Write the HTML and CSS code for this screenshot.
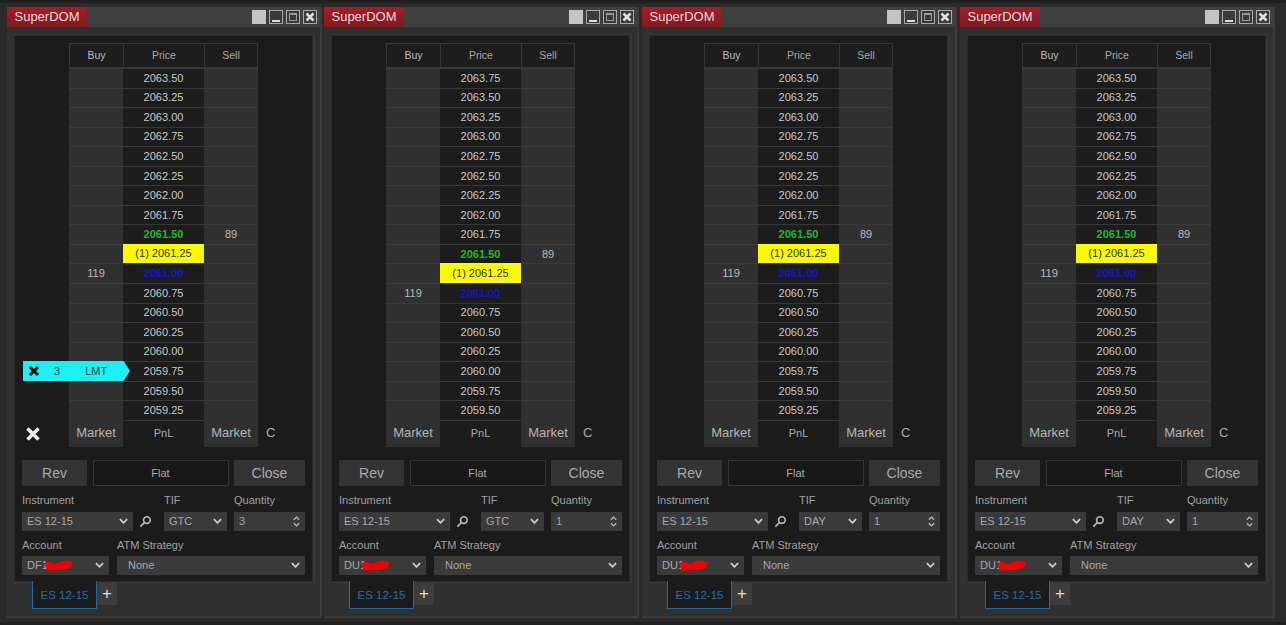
FILE: index.html
```html
<!DOCTYPE html>
<html lang="en">
<head>
<meta charset="utf-8">
<title>SuperDOM</title>
<link rel="stylesheet" href="styles.css">
</head>
<body>
<div class="desk">

<section class="win first">
  <header class="title"><span class="brand">SuperDOM</span><span class="wbtns"><i class="wb solid"></i><i class="wb"><b class="mn"></b></i><i class="wb"><b class="mx"></b></i><i class="wb"><svg viewBox="0 0 12 12"><path d="M2.5 2.5l7 7M9.5 2.5l-7 7"/></svg></i></span></header>
  <div class="panel">
    <div class="ladder">
      <div class="hd buy">Buy</div><div class="hd">Price</div><div class="hd">Sell</div>
      <div class="buy"></div><div class="px">2063.50</div><div class="sell"></div>
      <div class="buy"></div><div class="px">2063.25</div><div class="sell"></div>
      <div class="buy"></div><div class="px">2063.00</div><div class="sell"></div>
      <div class="buy"></div><div class="px">2062.75</div><div class="sell"></div>
      <div class="buy"></div><div class="px">2062.50</div><div class="sell"></div>
      <div class="buy"></div><div class="px">2062.25</div><div class="sell"></div>
      <div class="buy"></div><div class="px">2062.00</div><div class="sell"></div>
      <div class="buy"></div><div class="px">2061.75</div><div class="sell"></div>
      <div class="buy"></div><div class="px ask">2061.50</div><div class="sell">89</div>
      <div class="buy"></div><div class="px last">(1) 2061.25</div><div class="sell"></div>
      <div class="buy">119</div><div class="px bid">2061.00</div><div class="sell"></div>
      <div class="buy"></div><div class="px">2060.75</div><div class="sell"></div>
      <div class="buy"></div><div class="px">2060.50</div><div class="sell"></div>
      <div class="buy"></div><div class="px">2060.25</div><div class="sell"></div>
      <div class="buy"></div><div class="px">2060.00</div><div class="sell"></div>
      <div class="buy"></div><div class="px">2059.75</div><div class="sell"></div>
      <div class="buy"></div><div class="px">2059.50</div><div class="sell"></div>
      <div class="buy"></div><div class="px">2059.25</div><div class="sell"></div>
      <div class="cancel"><svg viewBox="0 0 16 16"><path d="M2.5 2.5l11 11M13.5 2.5l-11 11"/></svg></div><div class="mk">Market</div><div class="pnl">PnL</div><div class="mk">Market</div><div class="cc">C</div>
      <div class="order"><svg viewBox="0 0 12 12"><path d="M2 2l8 8M10 2l-8 8"/></svg><span class="oq">3</span><span class="ot">LMT</span></div>
    </div>
    <div class="acts"><div class="btn rev">Rev</div><div class="flat">Flat</div><div class="btn close">Close</div></div>
    <div class="form">
      <div class="lbl c1">Instrument</div><div class="lbl c3">TIF</div><div class="lbl c5">Quantity</div>
      <div class="sel c1">ES 12-15<svg class="chev" viewBox="0 0 10 6"><path d="M1 1l4 4 4-4"/></svg></div>
      <svg class="glass" viewBox="0 0 14 14"><circle cx="8.5" cy="5.5" r="3.6"/><path d="M6 8l-4.500 4.500"/></svg>
      <div class="sel c3">GTC<svg class="chev" viewBox="0 0 10 6"><path d="M1 1l4 4 4-4"/></svg></div>
      <div class="sel c5">3<svg class="spin" viewBox="0 0 8 14"><path d="M1 5l3-3 3 3M1 9l3 3 3-3"/></svg></div>
    </div>
    <div class="lbls"><div class="lbl ac">Account</div><div class="lbl">ATM Strategy</div></div>
    <div class="row2">
      <div class="sel ac">DF1<svg class="red" viewBox="0 0 30 10"><path d="M2 5c6-3 8 3 13 0s8-2 13-1M3 7c8 1 16 0 24-2"/></svg><svg class="chev" viewBox="0 0 10 6"><path d="M1 1l4 4 4-4"/></svg></div>
      <div class="sel atm">None<svg class="chev" viewBox="0 0 10 6"><path d="M1 1l4 4 4-4"/></svg></div>
    </div>
  </div>
  <nav class="tabs"><div class="tab">ES 12-15</div><div class="plus">+</div></nav>
</section>

<section class="win">
  <header class="title"><span class="brand">SuperDOM</span><span class="wbtns"><i class="wb solid"></i><i class="wb"><b class="mn"></b></i><i class="wb"><b class="mx"></b></i><i class="wb"><svg viewBox="0 0 12 12"><path d="M2.5 2.5l7 7M9.500 2.5l-7 7"/></svg></i></span></header>
  <div class="panel">
    <div class="ladder">
      <div class="hd buy">Buy</div><div class="hd">Price</div><div class="hd">Sell</div>
      <div class="buy"></div><div class="px">2063.75</div><div class="sell"></div>
      <div class="buy"></div><div class="px">2063.50</div><div class="sell"></div>
      <div class="buy"></div><div class="px">2063.25</div><div class="sell"></div>
      <div class="buy"></div><div class="px">2063.00</div><div class="sell"></div>
      <div class="buy"></div><div class="px">2062.75</div><div class="sell"></div>
      <div class="buy"></div><div class="px">2062.50</div><div class="sell"></div>
      <div class="buy"></div><div class="px">2062.25</div><div class="sell"></div>
      <div class="buy"></div><div class="px">2062.00</div><div class="sell"></div>
      <div class="buy"></div><div class="px">2061.75</div><div class="sell"></div>
      <div class="buy"></div><div class="px ask">2061.50</div><div class="sell">89</div>
      <div class="buy"></div><div class="px last">(1) 2061.25</div><div class="sell"></div>
      <div class="buy">119</div><div class="px bid">2061.00</div><div class="sell"></div>
      <div class="buy"></div><div class="px">2060.75</div><div class="sell"></div>
      <div class="buy"></div><div class="px">2060.50</div><div class="sell"></div>
      <div class="buy"></div><div class="px">2060.25</div><div class="sell"></div>
      <div class="buy"></div><div class="px">2060.00</div><div class="sell"></div>
      <div class="buy"></div><div class="px">2059.75</div><div class="sell"></div>
      <div class="buy"></div><div class="px">2059.50</div><div class="sell"></div>
      <div class="cancel"></div><div class="mk">Market</div><div class="pnl">PnL</div><div class="mk">Market</div><div class="cc">C</div>
    </div>
    <div class="acts"><div class="btn rev">Rev</div><div class="flat">Flat</div><div class="btn close">Close</div></div>
    <div class="form">
      <div class="lbl c1">Instrument</div><div class="lbl c3">TIF</div><div class="lbl c5">Quantity</div>
      <div class="sel c1">ES 12-15<svg class="chev" viewBox="0 0 10 6"><path d="M1 1l4 4 4-4"/></svg></div>
      <svg class="glass" viewBox="0 0 14 14"><circle cx="8.5" cy="5.5" r="3.6"/><path d="M6 8l-4.500 4.500"/></svg>
      <div class="sel c3">GTC<svg class="chev" viewBox="0 0 10 6"><path d="M1 1l4 4 4-4"/></svg></div>
      <div class="sel c5">1<svg class="spin" viewBox="0 0 8 14"><path d="M1 5l3-3 3 3M1 9l3 3 3-3"/></svg></div>
    </div>
    <div class="lbls"><div class="lbl ac">Account</div><div class="lbl">ATM Strategy</div></div>
    <div class="row2">
      <div class="sel ac">DU1<svg class="red" viewBox="0 0 30 10"><path d="M2 5c6-3 8 3 13 0s8-2 13-1M3 7c8 1 16 0 24-2"/></svg><svg class="chev" viewBox="0 0 10 6"><path d="M1 1l4 4 4-4"/></svg></div>
      <div class="sel atm">None<svg class="chev" viewBox="0 0 10 6"><path d="M1 1l4 4 4-4"/></svg></div>
    </div>
  </div>
  <nav class="tabs"><div class="tab">ES 12-15</div><div class="plus">+</div></nav>
</section>

<section class="win">
  <header class="title"><span class="brand">SuperDOM</span><span class="wbtns"><i class="wb solid"></i><i class="wb"><b class="mn"></b></i><i class="wb"><b class="mx"></b></i><i class="wb"><svg viewBox="0 0 12 12"><path d="M2.5 2.5l7 7M9.500 2.5l-7 7"/></svg></i></span></header>
  <div class="panel">
    <div class="ladder">
      <div class="hd buy">Buy</div><div class="hd">Price</div><div class="hd">Sell</div>
      <div class="buy"></div><div class="px">2063.50</div><div class="sell"></div>
      <div class="buy"></div><div class="px">2063.25</div><div class="sell"></div>
      <div class="buy"></div><div class="px">2063.00</div><div class="sell"></div>
      <div class="buy"></div><div class="px">2062.75</div><div class="sell"></div>
      <div class="buy"></div><div class="px">2062.50</div><div class="sell"></div>
      <div class="buy"></div><div class="px">2062.25</div><div class="sell"></div>
      <div class="buy"></div><div class="px">2062.00</div><div class="sell"></div>
      <div class="buy"></div><div class="px">2061.75</div><div class="sell"></div>
      <div class="buy"></div><div class="px ask">2061.50</div><div class="sell">89</div>
      <div class="buy"></div><div class="px last">(1) 2061.25</div><div class="sell"></div>
      <div class="buy">119</div><div class="px bid">2061.00</div><div class="sell"></div>
      <div class="buy"></div><div class="px">2060.75</div><div class="sell"></div>
      <div class="buy"></div><div class="px">2060.50</div><div class="sell"></div>
      <div class="buy"></div><div class="px">2060.25</div><div class="sell"></div>
      <div class="buy"></div><div class="px">2060.00</div><div class="sell"></div>
      <div class="buy"></div><div class="px">2059.75</div><div class="sell"></div>
      <div class="buy"></div><div class="px">2059.50</div><div class="sell"></div>
      <div class="buy"></div><div class="px">2059.25</div><div class="sell"></div>
      <div class="cancel"></div><div class="mk">Market</div><div class="pnl">PnL</div><div class="mk">Market</div><div class="cc">C</div>
    </div>
    <div class="acts"><div class="btn rev">Rev</div><div class="flat">Flat</div><div class="btn close">Close</div></div>
    <div class="form">
      <div class="lbl c1">Instrument</div><div class="lbl c3">TIF</div><div class="lbl c5">Quantity</div>
      <div class="sel c1">ES 12-15<svg class="chev" viewBox="0 0 10 6"><path d="M1 1l4 4 4-4"/></svg></div>
      <svg class="glass" viewBox="0 0 14 14"><circle cx="8.5" cy="5.5" r="3.6"/><path d="M6 8l-4.500 4.500"/></svg>
      <div class="sel c3">DAY<svg class="chev" viewBox="0 0 10 6"><path d="M1 1l4 4 4-4"/></svg></div>
      <div class="sel c5">1<svg class="spin" viewBox="0 0 8 14"><path d="M1 5l3-3 3 3M1 9l3 3 3-3"/></svg></div>
    </div>
    <div class="lbls"><div class="lbl ac">Account</div><div class="lbl">ATM Strategy</div></div>
    <div class="row2">
      <div class="sel ac">DU1<svg class="red" viewBox="0 0 30 10"><path d="M2 5c6-3 8 3 13 0s8-2 13-1M3 7c8 1 16 0 24-2"/></svg><svg class="chev" viewBox="0 0 10 6"><path d="M1 1l4 4 4-4"/></svg></div>
      <div class="sel atm">None<svg class="chev" viewBox="0 0 10 6"><path d="M1 1l4 4 4-4"/></svg></div>
    </div>
  </div>
  <nav class="tabs"><div class="tab">ES 12-15</div><div class="plus">+</div></nav>
</section>

<section class="win">
  <header class="title"><span class="brand">SuperDOM</span><span class="wbtns"><i class="wb solid"></i><i class="wb"><b class="mn"></b></i><i class="wb"><b class="mx"></b></i><i class="wb"><svg viewBox="0 0 12 12"><path d="M2.5 2.5l7 7M9.500 2.5l-7 7"/></svg></i></span></header>
  <div class="panel">
    <div class="ladder">
      <div class="hd buy">Buy</div><div class="hd">Price</div><div class="hd">Sell</div>
      <div class="buy"></div><div class="px">2063.50</div><div class="sell"></div>
      <div class="buy"></div><div class="px">2063.25</div><div class="sell"></div>
      <div class="buy"></div><div class="px">2063.00</div><div class="sell"></div>
      <div class="buy"></div><div class="px">2062.75</div><div class="sell"></div>
      <div class="buy"></div><div class="px">2062.50</div><div class="sell"></div>
      <div class="buy"></div><div class="px">2062.25</div><div class="sell"></div>
      <div class="buy"></div><div class="px">2062.00</div><div class="sell"></div>
      <div class="buy"></div><div class="px">2061.75</div><div class="sell"></div>
      <div class="buy"></div><div class="px ask">2061.50</div><div class="sell">89</div>
      <div class="buy"></div><div class="px last">(1) 2061.25</div><div class="sell"></div>
      <div class="buy">119</div><div class="px bid">2061.00</div><div class="sell"></div>
      <div class="buy"></div><div class="px">2060.75</div><div class="sell"></div>
      <div class="buy"></div><div class="px">2060.50</div><div class="sell"></div>
      <div class="buy"></div><div class="px">2060.25</div><div class="sell"></div>
      <div class="buy"></div><div class="px">2060.00</div><div class="sell"></div>
      <div class="buy"></div><div class="px">2059.75</div><div class="sell"></div>
      <div class="buy"></div><div class="px">2059.50</div><div class="sell"></div>
      <div class="buy"></div><div class="px">2059.25</div><div class="sell"></div>
      <div class="cancel"></div><div class="mk">Market</div><div class="pnl">PnL</div><div class="mk">Market</div><div class="cc">C</div>
    </div>
    <div class="acts"><div class="btn rev">Rev</div><div class="flat">Flat</div><div class="btn close">Close</div></div>
    <div class="form">
      <div class="lbl c1">Instrument</div><div class="lbl c3">TIF</div><div class="lbl c5">Quantity</div>
      <div class="sel c1">ES 12-15<svg class="chev" viewBox="0 0 10 6"><path d="M1 1l4 4 4-4"/></svg></div>
      <svg class="glass" viewBox="0 0 14 14"><circle cx="8.5" cy="5.5" r="3.6"/><path d="M6 8l-4.500 4.500"/></svg>
      <div class="sel c3">DAY<svg class="chev" viewBox="0 0 10 6"><path d="M1 1l4 4 4-4"/></svg></div>
      <div class="sel c5">1<svg class="spin" viewBox="0 0 8 14"><path d="M1 5l3-3 3 3M1 9l3 3 3-3"/></svg></div>
    </div>
    <div class="lbls"><div class="lbl ac">Account</div><div class="lbl">ATM Strategy</div></div>
    <div class="row2">
      <div class="sel ac">DU1<svg class="red" viewBox="0 0 30 10"><path d="M2 5c6-3 8 3 13 0s8-2 13-1M3 7c8 1 16 0 24-2"/></svg><svg class="chev" viewBox="0 0 10 6"><path d="M1 1l4 4 4-4"/></svg></div>
      <div class="sel atm">None<svg class="chev" viewBox="0 0 10 6"><path d="M1 1l4 4 4-4"/></svg></div>
    </div>
  </div>
  <nav class="tabs"><div class="tab">ES 12-15</div><div class="plus">+</div></nav>
</section>

</div>
</body>
</html>
```

FILE: styles.css
```css
* { box-sizing: border-box; }
html, body { margin: 0; height: 625px; overflow: hidden; background: #1f1f1f; }
body { font-family: "Liberation Sans", Arial, sans-serif; color: #b4b4b4; font-size: 11px; }

.desk { display: flex; gap: 3px; height: 619px; margin-top: 3px; padding: 4px 0 0 7px; background: #2a2a2a; }

.win { width: 315px; height: 611px; display: flex; flex-direction: column; background: #303030; border-right: 2px solid #3c3c3c; border-bottom: 2px solid #3c3c3c; }
.win.first { margin-right: -1px; }

.title { height: 20px; flex: none; display: flex; justify-content: space-between; align-items: center; background: #404040; padding-right: 3px; }
.brand { width: 80px; height: 20px; background: linear-gradient(#a51c26, #851a20); color: #ddd; font-size: 13px; line-height: 20px; text-align: center; }
.wbtns { display: flex; gap: 3px; }
.wb { width: 14px; height: 14px; border: 1px solid #a8a8a8; display: flex; align-items: center; justify-content: center; background: #3a3a3a; }
.wb.solid { background: #c4c4c4; border-color: #c4c4c4; }
.wb svg { width: 12px; height: 12px; fill: none; stroke: #e0e0e0; stroke-width: 2.500; }
.mn { width: 8px; height: 2px; background: #ddd; margin-top: 7px; }
.mx { width: 8px; height: 8px; border: 1px solid #999; border-top-width: 2px; }

.panel { width: 297px; height: 545px; flex: none; margin: 9px 0 0 8px; background: #1b1b1b; padding-top: 7px; box-shadow: 0 0 0 1px #2a2a2a, 1px 0 0 2px #383838; }

.ladder { position: relative; display: grid; grid-template-columns: 54px 54px 81px 54px 54px; grid-template-rows: 25px repeat(18, 19.55px) 27px; }
.ladder > div { display: flex; align-items: center; justify-content: center; padding-bottom: 1px; }
.hd { background: #1d1d1d; border: 1px solid #353535; border-right-width: 0; color: #a8a8a8; font-size: 10.500px; }
.hd:nth-child(3) { border-right-width: 1px; }
.hd.buy { grid-column: 2; background: #1d1d1d; }
.buy { grid-column: 2; background: #303030; border-top: 1px solid #3a3a3a; color: #bbb; }
.sell { background: #303030; border-top: 1px solid #3a3a3a; color: #bbb; }
.px { background: #1c1c1c; border-top: 1px solid #383838; color: #c8c8c8; }
.px.ask { color: #1fb92a; font-weight: 700; }
.px.last { background: #fafa00; color: #333; border-top: 0; }
.px.bid { color: #1414c8; font-weight: 700; }

.ladder > .cancel { grid-column: 1; justify-content: flex-start; padding: 2px 0 0 10px; }
.cancel svg { width: 16px; height: 16px; fill: none; stroke: #eee; stroke-width: 3.500; }
.mk { background: #303030; font-size: 13px; color: #b4b4b4; }
.pnl { background: #1c1c1c; border-top: 1px solid #383838; color: #aaa; }
.ladder > .cc { justify-content: flex-start; padding-left: 8px; font-size: 13px; color: #aaa; }

.ladder > .order { position: absolute; left: 8px; top: 318px; width: 107px; height: 20px; padding: 0; background: #1df0f4; clip-path: polygon(0 0, 94% 0, 100% 50%, 94% 100%, 0 100%); color: #444; justify-content: flex-start; }
.order svg { width: 12px; height: 12px; margin-left: 5px; fill: none; stroke: #111; stroke-width: 3; }
.oq { margin-left: 14px; }
.ot { margin-left: 25px; }

.acts { display: flex; justify-content: space-between; margin: 13px 7px 0; height: 26px; }
.btn { display: flex; align-items: center; justify-content: center; background: #333; color: #a8a8a8; font-size: 14px; }
.rev { width: 65px; }
.close { width: 71px; }
.flat { width: 136px; background: #181818; border: 1px solid #333; color: #a8a8a8; display: flex; align-items: center; justify-content: center; }

.form { display: grid; grid-template-columns: 111px 31px 63px 7px 71px; grid-template-rows: 14px 19px; row-gap: 5px; margin: 7px 7px 0; }
.c1 { grid-column: 1; }
.c3 { grid-column: 3; }
.c5 { grid-column: 5; }
.lbl { color: #a0a0a0; font-size: 11px; line-height: 14px; white-space: nowrap; }

.sel { position: relative; display: flex; align-items: center; justify-content: space-between; background: #3a3a3a; color: #a8a8a8; font-size: 11px; padding: 0 5px; height: 19px; }
.glass { grid-column: 2; grid-row: 2; width: 13px; height: 13px; margin: 3px 0 0 6px; fill: none; stroke: #b8b8b8; stroke-width: 1.800; }
.chev { width: 9px; height: 6px; fill: none; stroke: #ccc; stroke-width: 2; flex: none; }
.spin { width: 7px; height: 13px; fill: none; stroke: #bbb; stroke-width: 1.500; }

.lbls { display: flex; gap: 8px; margin: 7px 7px 0; height: 14px; }
.ac { width: 87px; flex: none; }
.row2 { display: flex; gap: 8px; margin: 4px 7px 0; }
.atm { width: 188px; padding-left: 11px; }
.red { position: absolute; left: 21px; top: 4px; width: 31px; height: 11px; fill: none; stroke: #f30000; stroke-width: 5; }

.tabs { display: flex; align-items: flex-start; margin-left: 25px; }
.tab { width: 65px; height: 28px; background: #1b1b1b; border: 1px solid #1a6ca8; border-top-width: 0; color: #1c70ad; font-size: 11.500px; display: flex; align-items: center; justify-content: center; }
.plus { width: 20px; height: 22px; margin-top: 2px; background: #3d3d3d; color: #ddd; font-size: 17px; display: flex; align-items: center; justify-content: center; }
```
